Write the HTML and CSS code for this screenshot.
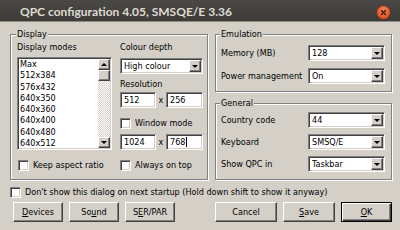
FILE: index.html
```html
<!DOCTYPE html>
<html>
<head>
<meta charset="utf-8">
<title>QPC configuration</title>
<link rel="stylesheet" href="styles.css">
</head>
<body>
<div class="window">
  <div class="titlebar">
    <span class="title">QPC configuration 4.05, SMSQE/E 3.36</span>
    <span class="close"><svg width="13" height="13" viewBox="0 0 13 13"><path d="M4.6 4.6l3.8 3.8M8.4 4.6l-3.8 3.8" stroke="#4a2414" stroke-width="1.5" stroke-linecap="round"/></svg></span>
  </div>
  <div class="content">
    <div class="groups">
      <fieldset class="group display">
        <legend>Display</legend>
        <div class="display-body">
          <div class="col modes">
            <div class="label">Display modes</div>
            <div class="listbox">
              <ul class="items">
                <li>Max</li>
                <li>512x384</li>
                <li>576x432</li>
                <li>640x350</li>
                <li>640x360</li>
                <li>640x400</li>
                <li>640x480</li>
                <li>640x512</li>
              </ul>
              <div class="scrollbar">
                <div class="sbtn raised"><i class="tri-up"></i></div>
                <div class="thumb raised"></div>
                <div class="track"></div>
                <div class="sbtn raised"><i class="tri-down"></i></div>
              </div>
            </div>
            <div class="check gap-top"><span class="box"></span><span>Keep aspect ratio</span></div>
          </div>
          <div class="col depth">
            <div class="label">Colour depth</div>
            <div class="combo depth-combo"><span class="combo-text">High colour</span><span class="combo-btn raised"><i class="tri-down"></i></span></div>
            <div class="label res-label">Resolution</div>
            <div class="res-row first">
              <span class="field">512</span><span class="times">x</span><span class="field">256</span>
            </div>
            <div class="check gap-top"><span class="box"></span><span>Window mode</span></div>
            <div class="res-row second">
              <span class="field">1024</span><span class="times">x</span><span class="field">768<i class="caret"></i></span>
            </div>
            <div class="check gap-top"><span class="box"></span><span>Always on top</span></div>
          </div>
        </div>
      </fieldset>
      <div class="right">
        <fieldset class="group emulation">
          <legend>Emulation</legend>
          <div class="rows">
            <div class="row"><span>Memory (MB)</span><div class="combo"><span class="combo-text">128</span><span class="combo-btn raised"><i class="tri-down"></i></span></div></div>
            <div class="row"><span>Power management</span><div class="combo"><span class="combo-text">On</span><span class="combo-btn raised"><i class="tri-down"></i></span></div></div>
          </div>
        </fieldset>
        <fieldset class="group general">
          <legend>General</legend>
          <div class="rows">
            <div class="row"><span>Country code</span><div class="combo"><span class="combo-text">44</span><span class="combo-btn raised"><i class="tri-down"></i></span></div></div>
            <div class="row"><span>Keyboard</span><div class="combo"><span class="combo-text">SMSQ/E</span><span class="combo-btn raised"><i class="tri-down"></i></span></div></div>
            <div class="row"><span>Show QPC in</span><div class="combo"><span class="combo-text">Taskbar</span><span class="combo-btn raised"><i class="tri-down"></i></span></div></div>
          </div>
        </fieldset>
      </div>
    </div>
    <div class="check startup"><span class="box"></span><span>Don't show this dialog on next startup (Hold down shift to show it anyway)</span></div>
    <div class="buttons">
      <div class="btn-group">
        <span class="btn raised w50"><u>D</u>evices</span>
        <span class="btn raised w50">So<u>u</u>nd</span>
        <span class="btn raised w50">S<u>E</u>R/PAR</span>
      </div>
      <div class="btn-group">
        <span class="btn raised w62">Cancel</span>
        <span class="btn raised w52"><u>S</u>ave</span>
        <span class="btn default w51"><u>O</u>K</span>
      </div>
    </div>
  </div>
</div>
</body>
</html>
```
FILE: styles.css
```css
* { box-sizing: border-box; }
html, body { margin: 0; padding: 0; }
body {
  width: 400px;
  height: 230px;
  overflow: hidden;
  background: #d4d0c8;
  font-family: "DejaVu Sans Condensed", "DejaVu Sans", sans-serif;
  font-stretch: condensed;
  font-size: 9px;
  color: #000;
}
.window {
  width: 400px;
  height: 230px;
  display: flex;
  flex-direction: column;
  background: #d4d0c8;
}
.titlebar {
  height: 22px;
  flex: none;
  display: flex;
  align-items: flex-start;
  justify-content: space-between;
  padding: 0 10px 0 20px;
  background: linear-gradient(#4a4945, #3c3b37);
  border-bottom: 1px solid #8e8b85;
}
.title {
  margin-top: 5px;
  font-family: Lato, "DejaVu Sans", sans-serif;
  font-weight: 700;
  font-size: 12px;
  line-height: 14px;
  color: #dfdbd2;
}
.close {
  margin-top: 6px;
  width: 13px;
  height: 13px;
  border-radius: 50%;
  background: radial-gradient(circle at 50% 35%, #f6875a 0%, #e5592a 60%, #c4441a 100%);
  box-shadow: 0 0 0 0.5px #8a2f10;
  display: flex;
}
.content {
  flex: 1;
  display: flex;
  flex-direction: column;
  padding: 6px 8px 0 10px;
}
.groups {
  display: flex;
  gap: 7px;
  align-items: flex-start;
}
.group {
  margin: 0;
  min-width: 0;
  border: 1px solid #808080;
  box-shadow: inset 1px 1px #fff, 1px 1px #fff;
}
.group legend {
  padding: 0 1px;
  margin-left: -1px;
  line-height: 12px;
  background: #d4d0c8;
}
.display {
  width: 198px;
  padding: 1px 4px 8px 6px;
}
.display-body {
  display: flex;
  gap: 8px;
}
.col {
  display: flex;
  flex-direction: column;
}
.modes { width: 95px; }
.depth { width: 83px; }
.label { line-height: 12px; height: 12px; white-space: nowrap; }

.listbox {
  margin-top: 4px;
  height: 93px;
  display: flex;
  background: #fff;
  border: 1px solid;
  border-color: #808080 #fff #fff #808080;
  box-shadow: inset 1px 1px #404040, inset -1px -1px #d4d0c8;
  padding: 1px;
}
.items {
  flex: 1;
  list-style: none;
  margin: 0;
  padding: 0 0 0 1px;
  overflow: hidden;
}
.items li {
  line-height: 11.3px;
  height: 11.3px;
  white-space: nowrap;
}
.scrollbar {
  width: 12px;
  display: flex;
  flex-direction: column;
}
.sbtn {
  height: 11px;
  display: flex;
  align-items: center;
  justify-content: center;
}
.thumb { height: 11px; }
.track {
  flex: 1;
  background: repeating-conic-gradient(#fff 0 25%, #d4d0c8 0 50%) 0 0 / 2px 2px;
}
.raised {
  background: #d4d0c8;
  border: 1px solid;
  border-color: #fff #404040 #404040 #fff;
  box-shadow: inset -1px -1px #808080;
}
.tri-down, .tri-up {
  display: block;
  width: 0;
  height: 0;
  border-left: 3px solid transparent;
  border-right: 3px solid transparent;
}
.tri-down { border-top: 3px solid #000; }
.tri-up { border-bottom: 3px solid #000; }

.check {
  display: flex;
  align-items: center;
  gap: 4px;
  height: 12px;
  white-space: nowrap;
}
.gap-top { margin-top: 9px; }
.modes .check { padding-left: 1px; }
.box {
  flex: none;
  width: 11px;
  height: 11px;
  background: #fff;
  border: 1px solid;
  border-color: #808080 #fff #fff #808080;
  box-shadow: inset 1px 1px #404040, inset -1px -1px #d4d0c8;
}

.combo {
  height: 16px;
  display: flex;
  align-items: center;
  background: #fff;
  border: 1px solid;
  border-color: #808080 #fff #fff #808080;
  box-shadow: inset 1px 1px #404040, inset -1px -1px #d4d0c8;
  padding: 1px;
}
.depth-combo { margin-top: 5px; }
.combo-text {
  flex: 1;
  padding-left: 2px;
  white-space: nowrap;
}
.combo-btn {
  flex: none;
  width: 12px;
  height: 12px;
  display: flex;
  align-items: center;
  justify-content: center;
}
.res-label { margin-top: 4px; }
.res-row {
  display: flex;
  align-items: center;
  height: 16px;
}
.res-row.first { margin-top: 2px; }
.res-row.second { margin-top: 5px; }
.field {
  width: 36px;
  height: 16px;
  display: flex;
  align-items: center;
  padding-left: 3px;
  background: #fff;
  border: 1px solid;
  border-color: #808080 #fff #fff #808080;
  box-shadow: inset 1px 1px #404040, inset -1px -1px #d4d0c8;
}
.field:last-child { width: 37px; }
.times {
  width: 10px;
  text-align: center;
}
.caret {
  display: block;
  width: 1px;
  height: 10px;
  background: #000;
  margin-left: 1px;
}

.right {
  width: 177px;
  display: flex;
  flex-direction: column;
  gap: 5px;
}
.emulation { padding: 5px 6px 7px 5px; }
.general { padding: 3px 6px 7px 5px; }
.rows {
  display: flex;
  flex-direction: column;
}
.emulation .rows { gap: 7px; }
.general .rows { gap: 6px; }
.row {
  display: flex;
  align-items: center;
  justify-content: space-between;
  white-space: nowrap;
}
.row .combo { width: 77px; }

.startup { margin-top: 6px; }

.buttons {
  margin-top: 4px;
  display: flex;
  justify-content: space-between;
  padding-left: 3px;
}
.btn-group {
  display: flex;
  gap: 6px;
}
.btn {
  height: 20px;
  display: flex;
  align-items: center;
  justify-content: center;
  white-space: nowrap;
}
.btn u { text-decoration-thickness: 1px; text-underline-offset: 1px; }
.w50 { width: 50px; }
.w51 { width: 51px; }
.w52 { width: 52px; }
.w62 { width: 62px; }
.default {
  background: #d4d0c8;
  border: 1px solid #000;
  box-shadow: inset 1px 1px #fff, inset -1px -1px #404040, inset -2px -2px #808080;
}
```
